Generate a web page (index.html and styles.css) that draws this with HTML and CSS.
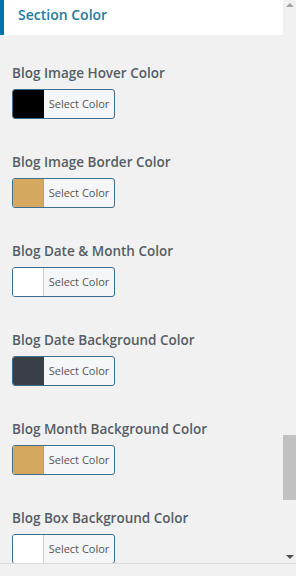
FILE: index.html
```html
<!DOCTYPE html>
<html>
<head>
  <meta charset="utf-8">
  <title>Section Color</title>
  <link rel="stylesheet" href="styles.css">
</head>
<body>
  <div class="frame">
    <div class="viewport">
      <div class="panel">
        <div class="section-head">Section Color</div>

        <div class="controls">
          <div class="control">
            <span class="control-label">Blog Image Hover Color</span>
            <button class="color-btn"><span class="swatch swatch-black"></span><span class="btn-text">Select Color</span></button>
          </div>
          <div class="control">
            <span class="control-label">Blog Image Border Color</span>
            <button class="color-btn"><span class="swatch swatch-gold"></span><span class="btn-text">Select Color</span></button>
          </div>
          <div class="control">
            <span class="control-label">Blog Date &amp; Month Color</span>
            <button class="color-btn"><span class="swatch swatch-white"></span><span class="btn-text">Select Color</span></button>
          </div>
          <div class="control">
            <span class="control-label">Blog Date Background Color</span>
            <button class="color-btn"><span class="swatch swatch-dark"></span><span class="btn-text">Select Color</span></button>
          </div>
          <div class="control">
            <span class="control-label">Blog Month Background Color</span>
            <button class="color-btn"><span class="swatch swatch-gold"></span><span class="btn-text">Select Color</span></button>
          </div>
          <div class="control">
            <span class="control-label">Blog Box Background Color</span>
            <button class="color-btn"><span class="swatch swatch-white"></span><span class="btn-text">Select Color</span></button>
          </div>
        </div>
      </div>

      <!-- scrollbar -->
      <div class="scrollbar">
        <span class="arrow arrow-up"></span>
        <div class="track"><div class="thumb"></div></div>
        <span class="arrow arrow-down"></span>
      </div>
    </div>
    <div class="bottom-strip"></div>
  </div>
</body>
</html>
```

FILE: styles.css
```css
body {
  margin: 0;
  background: #f1f1f1;
  font-family: "Open Sans", "Noto Sans", sans-serif;
  overflow: hidden;
}

.frame {
  width: 296px;
  height: 576px;
  display: flex;
  flex-direction: column;
}

.viewport {
  height: 563px;
  display: flex;
  overflow: hidden;
}

.panel {
  width: 283px;
  overflow: hidden;
}

.section-head {
  height: 35px;
  box-sizing: border-box;
  background: #fff;
  border-left: 4px solid #0073aa;
  padding: 6px 0 0 14px;
  color: #23799e;
  font-size: 14px;
  font-weight: 600;
  line-height: 18px;
}

.controls {
  padding: 28px 12px 0 12px;
}

.control {
  display: flex;
  flex-direction: column;
  align-items: flex-start;
  margin-bottom: 33px;
}

.control-label {
  color: #555d66;
  font-size: 13.5px;
  font-weight: 600;
  line-height: 20px;
  margin-bottom: 6px;
}

.color-btn {
  display: flex;
  width: 103px;
  height: 30px;
  padding: 0;
  border: 1px solid #3c6e8f;
  border-radius: 3px;
  background: #f4f6f7;
  overflow: hidden;
  font-family: inherit;
}

.swatch {
  width: 30px;
  height: 100%;
  border-right: 1px solid #ccc;
}

.swatch-black { background: #000; border-right-color: #000; }
.swatch-gold { background: #d4a85f; border-right-color: #c9a05a; }
.swatch-white { background: #fff; }
.swatch-dark { background: #3a3f45; border-right-color: #3a3f45; }

.btn-text {
  flex: 1;
  color: #555;
  font-size: 11px;
  line-height: 28px;
  text-align: center;
}

.scrollbar {
  width: 13px;
  display: flex;
  flex-direction: column;
  align-items: center;
  background: #f1f1f1;
}

.arrow {
  width: 0;
  height: 0;
  border-left: 4px solid transparent;
  border-right: 4px solid transparent;
}

.arrow-up {
  margin-top: 3px;
  border-bottom: 4px solid #a3a3a3;
}

.arrow-down {
  margin-bottom: 4px;
  border-top: 4px solid #505050;
}

.track {
  flex: 1;
  width: 100%;
}

.thumb {
  margin-top: 428px;
  height: 65px;
  background: #c1c1c1;
}

.bottom-strip {
  flex: 1;
  border-top: 1px solid #dcdcdc;
  background: #f1f1f1;
}
```
